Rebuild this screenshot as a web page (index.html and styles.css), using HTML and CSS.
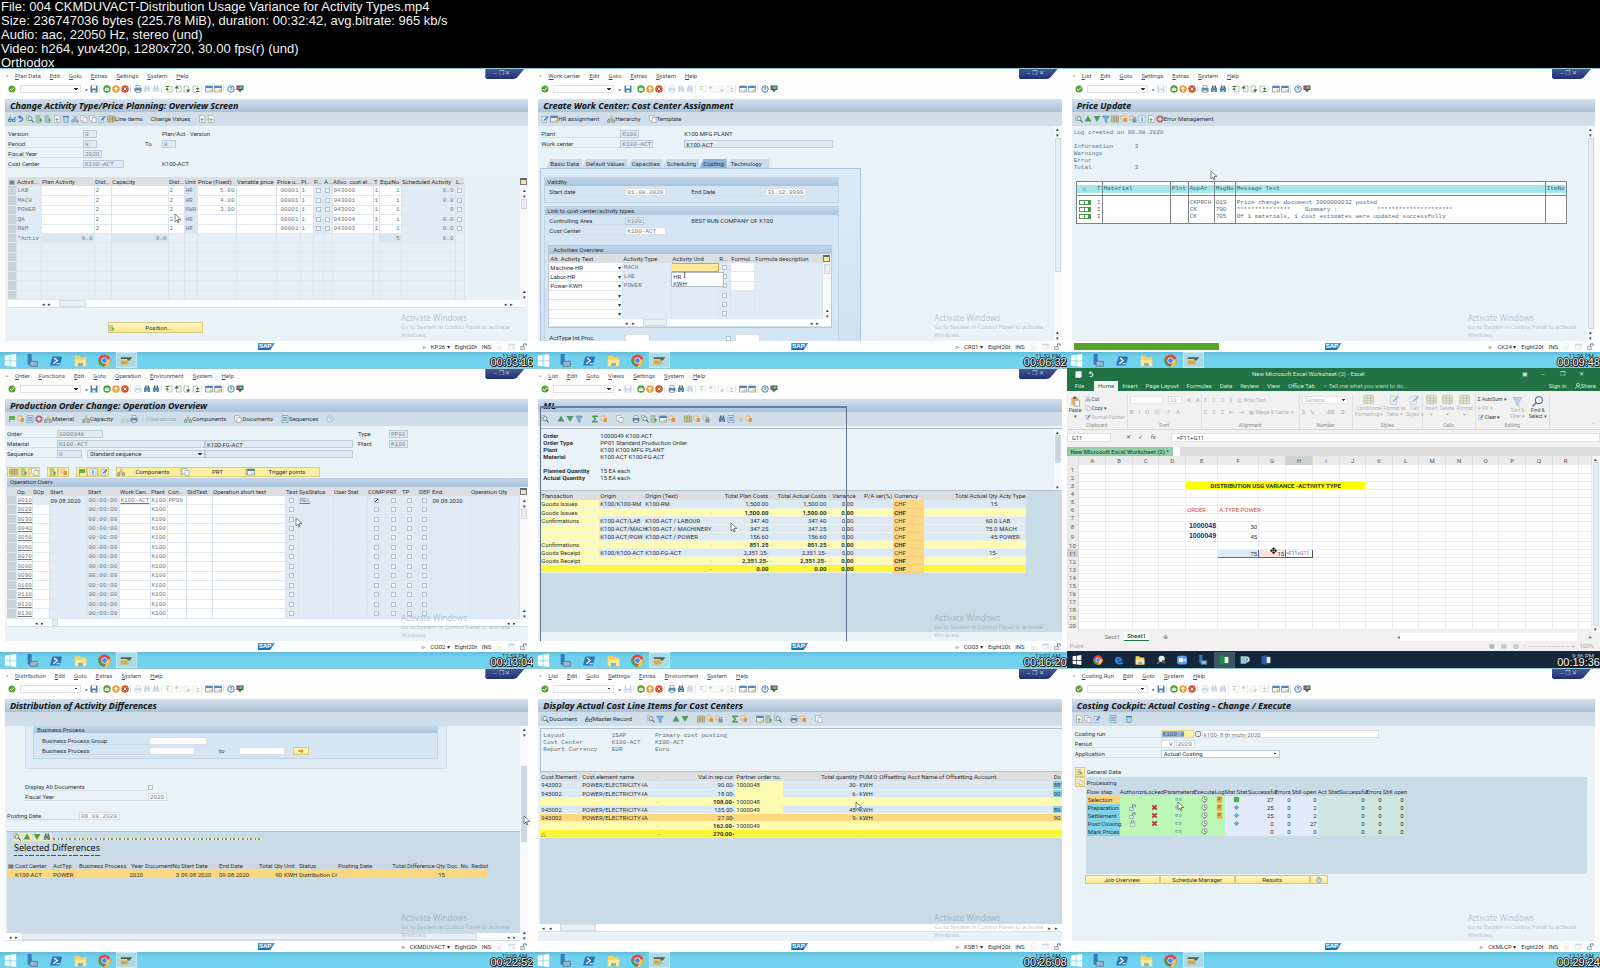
FILE: index.html
```
<!DOCTYPE html>
<html lang="en">
<head>
<meta charset="utf-8">
<title>004 CKMDUVACT-Distribution Usage Variance for Activity Types.mp4</title>
<link rel="stylesheet" href="styles.css">
</head>
<body>
<header class="info">
  <p>File: 004 CKMDUVACT-Distribution Usage Variance for Activity Types.mp4</p>
  <p>Size: 236747036 bytes (225.78 MiB), duration: 00:32:42, avg.bitrate: 965 kb/s</p>
  <p>Audio: aac, 22050 Hz, stereo (und)</p>
  <p>Video: h264, yuv420p, 1280x720, 30.00 fps(r) (und)</p>
  <p>Orthodox</p>
</header>
<main class="sheet">

<section class="shot" data-menu="Plan Data|Edit|Goto|Extras|Settings|System|Help" data-off="find findnext" data-tcode="KP26" data-clock="11:49 PM" data-time="00:03:16">
  <h2 class="title">Change Activity Type/Price Planning: Overview Screen</h2>
  <nav class="tools" data-tools="glasses undo lens rowadd rowadd page trash cut copy copy edit grid:Line_items gap none:Change_Values gap page page"></nav>
  <div class="body">
    <div class="form form-plan">
      <label for="p1v">Version</label><input id="p1v" class="w14" value="0" readonly><span></span><span class="txt">Plan/Act - Version</span>
      <label for="p1p">Period</label><input id="p1p" class="w14" value="8" readonly><label for="p1t" class="short">To</label><input id="p1t" class="w14" value="8" readonly>
      <label for="p1f">Fiscal Year</label><input id="p1f" class="w18" value="2020" readonly><span></span><span></span>
      <label for="p1c">Cost Center</label><input id="p1c" class="w39" value="K100-ACT" readonly><span></span><span class="txt">K100-ACT</span>
    </div>
    <div class="tablebox">
      <table class="grid plan" id="plan"></table>
      <div class="vscroll"><b class="cfg"></b><i>▴</i><i>▾</i><u></u><i>▴</i><i>▾</i></div>
    </div>
    <div class="hscroll h-plan"><i>◂ ▸</i><u></u><i>◂ ▸</i></div>
    <button class="yellow position"><span data-i="rowadd"></span><b>Position...</b></button>
  </div>
  <div class="cursor" style="left:174px;top:145px"></div>
</section>

<section class="shot" data-menu="Work center|Edit|Goto|Extras|System|Help" data-off="print find findnext p1 p2 p3 p4" data-tcode="CR01" data-clock="11:52 PM" data-time="00:06:32">
  <h2 class="title">Create Work Center: Cost Center Assignment</h2>
  <nav class="tools" data-tools="edit window:HR_assignment gap tree:Hierarchy gap copy:Template"></nav>
  <div class="body with-scroll">
   <div class="pane">
    <div class="form form-wc">
      <label for="p2p">Plant</label><input id="p2p" class="w18" value="K100" readonly><span class="txt">K100 MFG PLANT</span>
      <label for="p2w">Work center</label><input id="p2w" class="w32" value="K100-ACT" readonly><input class="sans" aria-label="Work center name" value="K100-ACT" readonly>
    </div>
    <div class="tabs"><button>Basic Data</button><button>Default Values</button><button>Capacities</button><button>Scheduling</button><button class="on">Costing</button><button>Technology</button></div>
    <div class="tabpane">
      <fieldset class="group">
        <h3>Validity</h3>
        <div class="form form-val">
          <label for="p2s">Start date</label><input id="p2s" class="w39 ed" value="01.08.2020"><label for="p2e">End Date</label><input id="p2e" class="w39 ed" value="31.12.9999">
        </div>
      </fieldset>
      <fieldset class="group grow">
        <h3>Link to cost center/activity types</h3>
        <div class="form form-val">
          <label for="p2a">Controlling Area</label><input id="p2a" class="w18" value="K100" readonly><span class="txt wide">BEST RUN COMPANY OF K100</span>
          <label for="p2c">Cost Center</label><input id="p2c" class="w39 ed" value="K100-ACT">
        </div>
        <div class="act">
          <h3>Activities Overview</h3>
          <div class="tablebox">
            <table class="grid" id="act"></table>
            <div class="vscroll"><b class="cfg"></b><u></u><i>▴</i><i>▾</i></div>
          </div>
          <div class="hscroll h-act"><i>◂ ▸</i><u></u><i>◂ ▸</i></div>
          <ul class="drop"><li>HR</li><li>KWH</li></ul>
        </div>
        <div class="form form-int"><label for="p2i">ActType Int.Proc.</label><input id="p2i" class="ed"><span></span><input type="checkbox" aria-label="Internal processing"><input class="ed" aria-label="Formula"></div>
      </fieldset>
    </div>
   </div>
   <div class="vscroll"><i>▴</i><i>▾</i><u class="long"></u><i>▴</i><i>▾</i></div>
  </div>
  <div class="ibeam" style="left:150px;top:202px">I</div>
</section>

<section class="shot" data-menu="List|Edit|Goto|Settings|Extras|System|Help" data-off="save" data-progress="1" data-tcode="CK24" data-clock="11:58 PM" data-time="00:09:48">
  <h2 class="title">Price Update</h2>
  <nav class="tools" data-tools="lens up down filter grid chart lock info page stop:Error_Management"></nav>
  <div class="body with-scroll">
   <div class="pane">
<pre class="log">Log created on 09.08.2020

Information      3
Warnings
Error
Total            3</pre>
    <table class="msgs">
      <colgroup><col class="c26"><col class="c68"><col class="c18"><col class="c26"><col class="c21"><col><col class="c21"></colgroup>
      <tr><th class="r"><span>△&nbsp;&nbsp; T</span></th><th><span>Material</span></th><th><span>Plnt</span></th><th><span>AppAr</span></th><th><span>MsgNo</span></th><th><span>Message Text</span></th><th><span>ItmNo</span></th></tr>
      <tr><td class="r"><s></s>I</td><td></td><td></td><td>CKPRCH</td><td>019</td><td>Price change document 3000000032 posted</td><td></td></tr>
      <tr><td class="r"><s></s>I</td><td></td><td></td><td>CK</td><td>790</td><td>***************&nbsp;&nbsp;&nbsp; Summary :&nbsp;&nbsp;&nbsp;&nbsp;&nbsp;&nbsp;&nbsp;&nbsp;&nbsp;&nbsp; *********************</td><td></td></tr>
      <tr><td class="r"><s></s>I</td><td></td><td></td><td>CK</td><td>705</td><td>Of 1 materials, 1 cost estimates were updated successfully</td><td></td></tr>
    </table>
   </div>
   <div class="vscroll"><i>▴</i><i>▾</i><u class="full"></u><i>▴</i><i>▾</i></div>
  </div>
  <div class="cursor" style="left:143px;top:102px"></div>
</section>

<section class="shot" data-menu="Order|Functions|Edit|Goto|Operation|Environment|System|Help" data-off="print" data-tcode="CO02" data-clock="11:59 PM" data-time="00:13:04">
  <h2 class="title">Production Order Change: Operation Overview</h2>
  <nav class="tools" data-tools="flag chart doc stop tree:Material gap tree:Capacity gap -tree print -info:Operations gap tree:Components gap copy:Documents gap doc:Sequences gap -help"></nav>
  <div class="body">
    <div class="form form-po">
      <label for="p4o">Order</label><input id="p4o" class="w46" value="1000048" readonly><span></span><span></span><label for="p4t" class="short">Type</label><input id="p4t" class="w18" value="PP01" readonly>
      <label for="p4m">Material</label><input id="p4m" value="K100-ACT" readonly><input class="sans" aria-label="Material text" value="K100-FG-ACT" readonly><span></span><label for="p4p" class="short">Plant</label><input id="p4p" class="w18" value="K100" readonly>
      <label for="p4s">Sequence</label><div class="pair"><input id="p4s" class="w25" value="0" readonly><select class="flat" aria-label="Sequence type"><option>Standard sequence</option></select></div><input aria-label="Sequence text" readonly>
    </div>
    <div class="strip"><button data-i="grid" aria-label="Select all"></button><button data-i="rowadd" aria-label="Select block"></button><button data-i="copy" aria-label="Deselect"></button><em></em><button data-i="rowadd" aria-label="Insert"></button><button data-i="chart" aria-label="Delete"></button><em></em><button data-i="flag" aria-label="Flag"></button><button data-i="info" aria-label="Detail"></button><button data-i="edit" aria-label="Change"></button><em></em><button class="wide"><span data-i="tree"></span><b>Components</b></button><button class="wide"><span data-i="copy"></span><b>PRT</b></button><button class="wide w74"><span data-i="window"></span><b>Trigger points</b></button></div>
    <h3 class="bar">Operation Overv.</h3>
    <div class="tablebox">
      <table class="grid ops" id="ops"></table>
      <div class="vscroll"><b class="cfg"></b><i>▴</i><i>▾</i><u></u><i>▴</i><i>▾</i></div>
    </div>
    <div class="hscroll h-ops"><i>◂ ▸</i><u></u><i>◂ ▸</i></div>
  </div>
  <div class="cursor" style="left:295px;top:149px"></div>
</section>

<section class="shot" data-menu="List|Edit|Goto|Views|Settings|System|Help" data-off="save findnext p1 p2 p3 p4" data-tcode="CO03" data-clock="12:02 AM" data-time="00:16:20">
  <h2 class="title">ML</h2>
  <nav class="tools" data-tools="lens gap up down filter gap sum chart gap copy gap print lens rowadd window chart gap grid chart lock gap find doc -chart chart"></nav>
  <div class="body alv">
    <div class="head">
      <dl>
        <dt>Order</dt><dd>1000049 K100-ACT</dd>
        <dt>Order Type</dt><dd>PP01 Standard Production Order</dd>
        <dt>Plant</dt><dd>K100 K100 MFG PLANT</dd>
        <dt>Material</dt><dd>K100-ACT K100-FG-ACT</dd>
        <dt></dt><dd></dd>
        <dt>Planned Quantity</dt><dd>15 EA each</dd>
        <dt>Actual Quantity</dt><dd>15 EA each</dd>
      </dl>
      <div class="vscroll"><i>▴</i><u class="half"></u><i>▾</i></div>
    </div>
    <div class="fill"><table class="grid ml" id="ml"></table></div>
  </div>
  <div class="ghost"></div>
  <div class="cursor" style="left:197px;top:154px"></div>
</section>

<section class="shot excel" data-time="00:19:36">
  <div class="xl-title"><span data-i="save"></span><span data-i="undo"></span><p>New Microsoft Excel Worksheet (2) - Excel</p><i>▣</i><i>–</i><i>❐</i><i>✕</i></div>
  <div class="xl-tabs"><a href="#">File</a><a href="#" class="on">Home</a><a href="#">Insert</a><a href="#">Page Layout</a><a href="#">Formulas</a><a href="#">Data</a><a href="#">Review</a><a href="#">View</a><a href="#">Office Tab</a><em>♀ Tell me what you want to do...</em><a href="#" class="end">Sign in</a><a href="#" class="share"><span data-i="person"></span>Share</a></div>
  <div class="ribbon">
    <div class="rg g-clip"><div class="two"><button class="big dark"><span data-i="clip"></span>Paste<br>▾</button><div class="three"><button class="dark"><span data-i="cut"></span>Cut</button><button class="dark"><span data-i="copy"></span>Copy ▾</button><button><span data-i="edit"></span>Format Painter</button></div></div><p>Clipboard</p></div>
    <div class="rg g-font"><div class="rows"><div><input aria-label="Font" class="w32"><input aria-label="Font size" class="w14" value="11"><b>A</b><b>A</b></div><div><b>B</b><b><em>I</em></b><b><u>U</u></b><span data-i="grid"></span><span data-i="edit"></span><b>A</b></div></div><p>Font</p></div>
    <div class="rg g-align"><div class="rows"><div><b>≡</b><b>≡</b><b>≡</b><b>⟫</b><button>▤ Wrap Text</button></div><div><b>≡</b><b>≡</b><b>≡</b><b>⇤</b><b>⇥</b><button>▦ Merge &amp; Center ▾</button></div></div><p>Alignment</p></div>
    <div class="rg g-num"><div class="rows"><div><select aria-label="Number format"><option>General</option></select></div><div><b>$</b><b>%</b><b>,</b><b>.00</b><b>.0</b></div></div><p>Number</p></div>
    <div class="rg g-sty"><div class="two"><button class="big"><span data-i="grid"></span>Conditional<br>Formatting ▾</button><button class="big"><span data-i="edit"></span>Format as<br>Table ▾</button><button class="big"><span data-i="edit"></span>Cell<br>Styles ▾</button></div><p>Styles</p></div>
    <div class="rg g-cell"><div class="two"><button class="big"><span data-i="grid"></span>Insert<br>▾</button><button class="big"><span data-i="grid"></span>Delete<br>▾</button><button class="big"><span data-i="grid"></span>Format<br>▾</button></div><p>Cells</p></div>
    <div class="rg g-edit"><div class="two"><div class="three"><button class="dark">Σ AutoSum ▾</button><button>▾ Fill ▾</button><button class="dark"><span data-i="edit"></span>Clear ▾</button></div><button class="big"><span data-i="filter"></span>Sort &amp;<br>Filter ▾</button><button class="big dark"><span data-i="search"></span>Find &amp;<br>Select ▾</button></div><p>Editing</p></div>
    <i class="caret">⌃</i>
  </div>
  <div class="fx"><input aria-label="Name box" class="namebox" value="G11"><span>✕&nbsp;&nbsp;&nbsp;&nbsp; ✓&nbsp;&nbsp;&nbsp;&nbsp; <em>fx</em></span><input aria-label="Formula bar" class="formula" value="=F11+G11"></div>
  <div class="doctab"><b>New Microsoft Excel Worksheet (2) *</b><u></u></div>
  <div class="xl-main"><table class="cells" id="cells"></table><div class="vscroll"><i>▴</i><u class="full"></u><i>▾</i></div></div>
  <div class="sheets"><span>Sect1</span><b>Sheet1</b><i>⊕</i><div class="hbar"><i>◂</i><u></u><i>▸</i></div></div>
  <div class="xl-status"><span>Point</span><em>▦&nbsp;&nbsp;&nbsp; ▤&nbsp;&nbsp;&nbsp; ▥&nbsp;&nbsp; − ————————— +&nbsp;&nbsp; 100%</em></div>
  <div class="task dark" id="task10"></div>
  <div class="cross" style="left:203px;top:178px">✥</div>
</section>

<section class="shot" data-menu="Distribution|Edit|Goto|Extras|System|Help" data-off="print find findnext p1 p2 p3 p4" data-tcode="CKMDUVACT" data-clock="12:09 AM" data-time="00:22:52">
  <h2 class="title">Distribution of Activity Differences</h2>
  <nav class="tools"></nav>
  <div class="body with-scroll">
   <div class="pane dist">
    <div class="outer"><fieldset class="group">
      <h3>Business Process</h3>
      <div class="form form-bp">
        <label for="p7g">Business Process Group</label><input id="p7g" class="w58 ed">
        <label for="p7b">Business Process</label><input id="p7b" class="w46 ed"><label for="p7t" class="short">to</label><input id="p7t" class="w46 ed"><button class="yellow" data-i="arrow" aria-label="Multiple selection"></button>
      </div>
    </fieldset></div>
    <div class="form form-disp">
      <label for="p7d">Display All Documents</label><input id="p7d" type="checkbox">
      <label for="p7f">Fiscal Year</label><input id="p7f" class="w18 ed" value="2020">
    </div>
    <div class="form form-post"><label for="p7p">Posting Date</label><input id="p7p" class="w39 ed" value="09.08.2020"></div>
    <div class="fill diff">
      <nav class="cutbar"><button data-i="lens" aria-label="Details"></button><button data-i="up" aria-label="Sort ascending"></button><button data-i="down" aria-label="Sort descending"></button><button data-i="find" aria-label="Find"></button><span></span><span></span><span class="l"></span><span class="l"></span><span class="l"></span><span></span></nav>
      <h3 class="sel">Selected Differences</h3>
      <div class="sliver" aria-hidden="true"></div>
      <table class="grid diffs" id="diffs"></table>
    </div>
    <div class="hscroll h-dist"><i>◂ ▸</i><u></u><i>◂ ▸</i></div>
   </div>
   <div class="vscroll"><i>▴</i><i>▾</i><u class="low"></u><i>▴</i><i>▾</i></div>
  </div>
  <div class="cursor" style="left:523px;top:147px"></div>
</section>

<section class="shot" data-menu="List|Edit|Goto|Settings|Extras|Environment|System|Help" data-off="save findnext p1 p2 p3 p4" data-tcode="KSB1" data-clock="12:12 AM" data-time="00:26:08">
  <h2 class="title">Display Actual Cost Line Items for Cost Centers</h2>
  <nav class="tools" data-tools="lens:Document gap glasses:Master_Record gap gap lens filter gap up down gap grid chart lock gap sum chart gap window rowadd lens gap print chart gap copy"></nav>
  <div class="body alv">
    <div class="head ks"><pre>Layout             1SAP        Primary cost posting
Cost Center        K100-ACT    K100-ACT
Report Currency    EUR         Euro</pre></div>
    <div class="fill"><table class="grid ksb" id="ksb"></table></div>
    <div class="hscroll h-ksb"><i>◂ ◂</i><u></u><i>▸ ▸</i></div>
  </div>
  <div class="cursor" style="left:322px;top:133px"></div>
</section>

<section class="shot" data-menu="Costing Run|Edit|Goto|System|Help" data-off="print find findnext p1 p2 p3 p4" data-tcode="CKMLCP" data-clock="12:15 AM" data-time="00:29:24">
  <h2 class="title">Costing Cockpit: Actual Costing - Change / Execute</h2>
  <nav class="tools" data-tools="page copy edit gap doc gap trash"></nav>
  <div class="body">
    <div class="form form-run">
      <label for="p9r">Costing run</label><div class="pair"><input id="p9r" class="w32 hot" value="K100-8"><button class="match" aria-label="Value help"></button><input class="sans ed name" aria-label="Run name" value="k100- 8 th motn-2020"></div>
      <label for="p9p">Period</label><div class="pair tight"><input id="p9p" class="w14 ed r" value="8"><input class="w18 ed" aria-label="Year" value="2020"></div>
      <label for="p9a">Application</label><select id="p9a" class="white"><option>Actual Costing</option></select>
    </div>
    <div class="node"><button class="yellow" data-i="rowadd" aria-label="Expand"></button>General Data</div>
    <div class="proc">
      <button class="yellow" data-i="copy" aria-label="Collapse"></button>
      <div class="fill"><h3>Processing</h3><table class="grid flow" id="flow"></table></div>
    </div>
    <div class="jobs"><button class="yellow">Job Overview</button><button class="yellow">Schedule Manager</button><button class="yellow">Results</button><button class="yellow" data-i="help" aria-label="Refresh"></button></div>
  </div>
  <div class="cursor" style="left:110px;top:133px"></div>
</section>
</main>
<script src="app.js"></script>
</body>
</html>
```
FILE: styles.css
```
* { box-sizing: border-box; }
body { margin: 0; background: #000; font-family: Roboto, "Noto Sans", sans-serif; font-size: 6px; line-height: 8px; color: #2c3338; }
p, h2, h3, pre, dl, dd, ul { margin: 0; padding: 0; }
h2, h3 { font-weight: 400; font-size: 6px; }
i, em { font-style: normal; }
u { text-decoration: none; }
button, input, select { font: inherit; color: inherit; margin: 0; border-radius: 0; }
button { border: 0; padding: 0; background: none; white-space: nowrap; }
svg { display: block; width: 8px; height: 8px; }

.info { height: 68px; padding-left: 1px; background: #000; color: #f2f2f2; font: 13px/14px "Liberation Sans", Arial, sans-serif; }
.sheet { display: grid; grid-template-columns: repeat(3, minmax(0, 1fr)); }
.shot { position: relative; display: flex; flex-direction: column; min-height: 300px; min-width: 0; background: #fdfdfd; border-top: 1px solid #8fc9d8; overflow: hidden; white-space: nowrap; }

/* window chrome */
.menu { display: flex; gap: 9px; height: 14px; padding: 3px 0 0 6px; color: #4c5358; }
.menu a { color: inherit; text-decoration: none; }
.menu a::first-letter { text-decoration: underline; }
.menu span { width: 1px; margin-right: -1px; }
.std { display: flex; align-items: center; height: 16px; padding: 0 0 5px 8px; gap: 1px; }
.std em { width: 3px; height: 8px; border-left: 1px solid #e3e6e8; }
.std select { width: 61px; height: 9px; margin: 0 3px; border: 1px solid #e0e2e4; background: #fff; }
.off { opacity: .3; }
.winctl { position: absolute; top: 0; right: 9px; width: 39px; height: 10px; background: linear-gradient(#46598f, #1f2f77); clip-path: polygon(0 0, 100% 0, 80% 90%, 72% 100%, 4% 100%, 0 85%); color: #b9c4ea; text-align: center; padding-right: 6px; }
.title { height: 13px; margin: 0 5px; padding-left: 5px; background: linear-gradient(#d3e0ec, #a9c1d7); font: italic 700 9px/13px "Noto Sans", sans-serif; color: #0c1013; }
.tools { display: flex; align-items: center; gap: 1px; height: 14px; margin: 0 5px; padding-left: 3px; background: #cfdee8; }
.tools em { width: 6px; }
.tools button { display: flex; align-items: center; }
.body { position: relative; flex: 1; display: flex; flex-direction: column; margin: 0 5px; background: #e9f2f7; }
.with-scroll { flex-direction: row; }
.pane { flex: 1; min-width: 0; display: flex; flex-direction: column; }
.status { display: flex; align-items: center; justify-content: flex-end; height: 11px; padding-right: 6px; gap: 5px; background: #fff; position: relative; }
.status .sap { position: absolute; left: 258px; top: 2px; width: 17px; height: 7px; background: linear-gradient(#36a9e1, #1667ae); clip-path: polygon(0 0, 100% 0, 72% 100%, 0 100%); color: #fff; font: 700 6px/7px "Liberation Sans", sans-serif; padding-left: 1px; }
.status .bar-green { position: absolute; left: 7px; top: 2px; width: 145px; height: 7px; background: #54a62b; }
.status svg { width: 7px; height: 7px; }
.task { display: flex; align-items: center; height: 16px; background: linear-gradient(#63bcd9, #70d2ee 30%, #70d2ee); }
.task button { width: 24px; height: 16px; display: flex; align-items: center; justify-content: center; }
.task button:first-child { width: 20px; }
.task .on { width: 21px; background: #a9dbe9; border: 1px solid #c4e8f2; }
.task svg { width: 13px; height: 13px; }
.task .tray { margin-left: auto; width: 68px; height: 16px; text-align: right; padding-right: 6px; color: #1c3440; line-height: 7px; }
.time { position: absolute; right: 0; bottom: 0; font: 11px/11px "Liberation Sans", sans-serif; color: #fff; text-shadow: 1px 0 #111, -1px 0 #111, 0 1px #111, 0 -1px #111, 1px 1px #111; }
.mark { position: absolute; left: 401px; top: 243px; width: 112px; font-size: 6px; color: rgba(110, 125, 138, .42); white-space: normal; }
.mark b { display: block; font: 8px/11px "Noto Sans", sans-serif; }
.cursor, .ibeam, .cross { position: absolute; width: 8px; height: 10px; }
.ibeam { font: 8px/9px "Liberation Serif", serif; }
.cross { font: 9px/10px "DejaVu Sans", sans-serif; color: #111; }
.cursor svg { width: 8px; height: 10px; }
.ghost { position: absolute; left: 7px; top: 37px; width: 307px; bottom: 16px; border: 1px solid #5d7289; border-top: 2px solid #5b7fae; border-bottom: 0; }

/* form fields */
.form { display: grid; grid-auto-rows: 8px; row-gap: 2px; align-items: stretch; }
.form label { border-bottom: 1px solid #d3dee6; line-height: 8px; }
.form .short { border: 0; }
.form .txt { line-height: 8px; }
input { width: 100%; height: 8px; padding: 0 1px; border: 1px solid #bccbd8; background: #dfeaf3; font: 6px/6px "Liberation Mono", monospace; color: #7b8793; }
input.sans { font-family: Roboto, sans-serif; color: #2c3338; }
input.ed { background: #fff; border-color: #d8dee4; color: #72787e; }
input.r { text-align: right; }
input[type=checkbox] { appearance: none; width: 5px; height: 5px; padding: 0; border: 1px solid #b3c1ce; background: #f5f9fc; }
input[type=checkbox]:checked { background: linear-gradient(135deg, #fff 40%, #333 40%, #333 60%, #fff 60%); }
.form input[type=checkbox] { align-self: center; background: #fff; }
select { appearance: none; padding: 0 2px; border: 1px solid #bccbd8; }
select, .std select { background: linear-gradient(45deg, transparent 50%, #333 50%) no-repeat right 4px top 2px / 2px 2px, linear-gradient(-45deg, transparent 50%, #333 50%) no-repeat right 2px top 2px / 2px 2px, #fff; height: 8px; line-height: 6px; }
select.flat { background-color: #e2ecf4; }
.w14 { width: 14px; } .w18 { width: 19px; } .w25 { width: 25px; } .w32 { width: 33px; } .w39 { width: 41px; } .w46 { width: 46px; } .w58 { width: 58px; }
.form-plan { grid-template-columns: 75px 62px 17px 1fr; padding: 4px 0 0 3px; }
.form-wc { grid-template-columns: 79px 64px 149px; padding: 4px 0 0 3px; }
.form-val { grid-template-columns: 76px 66px 74px 1fr; padding: 2px 0 0 4px; }
.form-val .wide { grid-column: span 2; }
.form-int { grid-template-columns: 76px 25px 76px 9px 25px; padding: 6px 0 0 4px; }
.form-int label { border: 0; }
.form-po { grid-template-columns: 50px 148px 148px 5px 31px 20px; padding: 4px 0 0 2px; }
.pair { display: flex; gap: 5px; }
.pair select { flex: 1; }
.pair.tight { gap: 1px; }
.form-bp { grid-template-columns: 107px 70px 20px 54px 16px; padding: 4px 0 0 8px; }
.form-bp #p7g { grid-column: span 4; }
.form-bp label, .form-post label { border-color: #cbd9e4; }
.form-disp { grid-template-columns: 123px 20px; padding: 14px 0 0 20px; }
.form-post { grid-template-columns: 72px 40px; padding: 11px 0 0 2px; }
.form-run { grid-template-columns: 86px 218px; padding: 4px 0 0 3px; }
.form-run .pair { gap: 1px; }
.form-run select { width: 119px; }
.form-run .name { flex: 1; }
.hot { background: linear-gradient(90deg, #9db8d3 70%, #fdf0a3 70%); border-color: #e5d98d; color: #3c5873; }
.match { width: 6px; height: 6px; border: 1px solid #7d8b97; border-radius: 2px; align-self: center; }

/* scroll bars */
.vscroll { width: 8px; display: flex; flex-direction: column; background: #f7fafc; font-size: 5px; line-height: 6px; text-align: center; }
.vscroll i { height: 6px; }
.vscroll u { width: 6px; margin: 0 1px auto; height: 10px; background: #e6edf3; border: 1px solid #cdd8e1; }
.vscroll u.long { height: 134px; }
.vscroll u.full { flex: 1; margin-bottom: 0; }
.vscroll u.half { height: 28px; margin-bottom: auto; background: #cbd4db; }
.vscroll u.low { height: 76px; margin-top: 28px; background: #cad9e5; }
.vscroll .cfg { width: 7px; height: 7px; margin: 1px 0 2px; background: #fbe98b; border: 1px solid #6f7c86; border-top: 2px solid #4b6a88; }
.hscroll { display: flex; height: 8px; align-items: center; background: #fdfefe; border-bottom: 1px solid #d4e0ea; font-size: 5px; }
.hscroll u { height: 7px; margin: 0 auto 0 4px; border: 1px solid #cfdbe5; background: #e8f0f6; }
.hscroll i { word-spacing: 2px; padding: 0 4px; }
.h-plan { margin: 0 3px; padding: 0 8px 0 30px; } .h-plan u { width: 27px; }
.h-act { padding: 0 8px 0 72px; } .h-act u { width: 24px; }
.h-ops { margin: 0 0 0 2px; padding: 0 8px 0 24px; } .h-ops u { width: 6px; }
.h-dist u { flex: 1; margin: 0 26px 0 0; }
.h-ksb { margin-bottom: 9px; } .h-ksb u { width: 36px; }

/* tables */
.tablebox { display: flex; }
.tablebox table { flex: 1; min-width: 0; }
.grid { width: 100%; table-layout: fixed; border-collapse: collapse; line-height: 7px; }
.grid th { font-weight: 400; text-align: left; padding: 0 1px; background: #dcdfe2; height: 9px; }
.grid td { padding: 0 1px; border-bottom: 1px solid #dfe8f0; }
.grid .r { text-align: right; }
.grid .c { text-align: center; }
.grid input { display: block; margin: 0 auto; }
.grid svg { display: inline-block; width: 7px; height: 7px; vertical-align: top; }
.mono { font-family: "Liberation Mono", monospace; color: #75797d; }
.grid .w { background: #fff; }
.grid .u { text-decoration: underline; }
.plan { height: 123px; }
.plan td { height: 9px; }
.plan td, #act td, .ops td { border-right: 1px solid #dbe5ee; background: #e1ebf5; }
.plan td.w, #act td.w, .ops td.w { background: #fff; }
.plan td.s, .ops td.s { background: #cbd3da; }
.plan td.e { background: #e7eff6; }
.plan td.d { background: #d8e6f3; }
.body > .tablebox { margin: 9px 0 0 3px; }
.form-po ~ .tablebox { margin: 0 0 0 2px; }
.plan td.z, .ops td.z, .plan th.z { background: #e6f0f7; border: 0; }
.ops { height: 132px; }
.yellow { background: linear-gradient(#fff7c9, #fae78c); border: 1px solid #d5c681; display: flex; align-items: center; justify-content: center; }
.yellow svg { width: 6px; height: 6px; }
.position { width: 95px; height: 11px; margin: 14px 0 0 103px; }
.position b, .wide b { flex: 1; font-weight: 400; }

/* work center */
.tabs { display: flex; height: 9px; margin: 11px 0 0 8px; }
.tabs button { padding: 0 3px 0 4px; background: #c9dbea; clip-path: polygon(4px 0, 100% 0, 100% 100%, 0 100%); line-height: 9px; }
.tabs button:last-child { padding-right: 8px; }
.tabs .on { background: #8db2d8; }
.tabpane { flex: 1 1 0px; display: flex; flex-direction: column; width: 321px; margin-left: 2px; padding: 8px 21px 0 3px; border: 1px solid #a9c5de; border-bottom: 0; background: linear-gradient(#dcebf7, #cfe1f1); gap: 3px; overflow: hidden; }
.group { margin: 0; padding: 0; min-width: 0; border: 1px solid #bfd3e4; background: #d5e5f3; min-height: 26px; }
.group h3, .act h3, .bar { height: 8px; padding-left: 2px; background: linear-gradient(#c3d6e8, #a9c3dc); line-height: 8px; }
.grow { flex: 1; border-bottom: 0; }
.act { position: relative; margin: 10px 6px 0 3px; border: 1px solid #b5cade; }
.act h3 { padding-left: 4px; }
#act { height: 65px; }
#act td.hot { background: #fdea9b; border: 1px solid #c9a94d; }
.drop { position: absolute; left: 122px; top: 26px; width: 53px; height: 15px; padding-left: 1px; background: #fff; border: 1px solid #b3bcc4; list-style: none; line-height: 7px; }

/* price update */
.log { margin: 3px 0 0 2px; font: 6px/7px "Liberation Mono", monospace; color: #5d7890; }
.msgs { width: 491px; margin: 10px 0 0 4px; table-layout: fixed; border-collapse: collapse; border: 1px solid #7c8489; background: #fff; font: 6px/7px "Liberation Mono", monospace; color: #666b70; }
.msgs th, .msgs td { padding: 0 1px; height: 7px; text-align: left; border-left: 1px solid #7c8489; font-weight: 400; }
.msgs th { height: 14px; padding: 0; border-bottom: 1px solid #7c8489; }
.msgs th span { display: block; background: #a3e7ee; color: #3c5d6c; padding: 0 1px; height: 8px; }
.msgs tr:nth-child(2) td { padding-top: 3px; }
.msgs tr:last-child td { padding-bottom: 3px; }
.msgs .r { text-align: right; }
.msgs s { float: left; width: 12px; height: 5px; margin: 1px; border: 1px solid #4f9a4f; background: linear-gradient(90deg, #fff 4px, #58a558 4px, #58a558 5px, #fff 5px, #fff 8px, #2c9b3a 8px); }
.c26 { width: 26px; } .c68 { width: 68px; } .c18 { width: 18px; } .c21 { width: 21px; }

/* production order */
.strip { display: flex; height: 10px; margin: 9px 0 1px 2px; }
.strip button { width: 11px; display: flex; align-items: center; justify-content: center; background: #fbeea0; border: 1px solid #d9ca84; }
.strip em { width: 7px; }
.strip .wide { width: 65px; }
.strip .w74 { width: 74px; }
.bar { margin-left: 2px; padding-left: 3px; height: 9px; }

/* list viewer */
.head { display: flex; justify-content: space-between; height: 62px; margin: 2px 0 0 2px; border: 1px solid #aebdc9; border-width: 1px 0 0 1px; }
.head dl { display: grid; grid-template-columns: 57px 1fr; grid-auto-rows: 7px; padding: 3px 0 0 2px; line-height: 8px; }
.head dt { font-weight: 700; }
.ks { height: 43px; }
.head pre { padding: 3px 0 0 2px; font: 6px/7px "Liberation Mono", monospace; color: #6a6f74; }
.fill { flex: 1; margin-left: 2px; background: #c9dbe7; border-top: 1px solid #b2c1cc; }
.alv .fill { margin-bottom: 9px; }
.alv .fill:nth-last-child(2) { margin-bottom: 0; }
.ml { width: 486px; }
.ml td, .ksb td { height: 8px; border-color: #eaf1f6; background: #dde8f5; line-height: 7px; }
.ml td { border-bottom-color: #ecf2e8; }
.ml .y, .ksb .y, .ml tr.sub td, .ksb tr.sub td { background: #fdfbb0; }
.ml tr.tot td, .ksb tr.tot td { background: #fdf53a; }
.ml td.cur, .ml tr.sub td.cur, .ml tr.tot td.cur { background: #fbd983; border-bottom-color: #f6cf7b; }
.ksb tr.pick td, .diffs td { background: #fbd77e; }
.ksb td.cy { background: #86d3e3; }
.bold { font-weight: 700; }

/* distribution */
.outer { margin-left: 20px; margin-right: 73px; padding: 0 8px 9px 7px; height: 43px; border: 1px solid #c9dae7; border-top: 0; background: #dfebf5; }
.outer .group { height: 33px; }
.outer h3 { height: 6px; line-height: 5px; padding-left: 3px; }
.diff { margin-top: 11px; }
.cutbar { display: flex; gap: 1px; height: 9px; padding-left: 6px; align-items: center; }
.cutbar button { width: 9px; height: 8px; background: #f6eca6; }
.cutbar span { width: 20px; height: 2px; margin-top: 5px; background: repeating-linear-gradient(90deg, #889 0 2px, #f7edb0 2px 5px, #5d8c55 5px 6px, #f7edb0 6px 8px); }
.cutbar .l { width: 48px; }
.sel { padding-left: 7px; font: 9px/14px "Noto Sans", sans-serif; color: #111; }
.sliver { width: 86px; height: 1px; margin: 0 0 4px 7px; background: repeating-linear-gradient(90deg, #46525b 0 3px, #c9dbe7 3px 4px, #46525b 4px 9px, #c9dbe7 9px 11px); }
.diffs th { background: #ccd9e2; height: 10px; }
.diffs td { height: 8px; border: 0; }
.diffs { width: 481px; }

/* costing cockpit */
.node { display: flex; gap: 2px; height: 10px; margin: 9px 0 0 3px; line-height: 10px; }
.node .yellow, .proc .yellow { width: 10px; height: 10px; }
.proc { display: flex; margin: 0 8px 0 3px; height: 97px; }
.proc .fill { margin: 0; border: 0; margin-left: 1px; padding-left: 1px; }
.proc h3 { height: 10px; line-height: 11px; }
.flow { width: 318px; }
.flow th { background: none; padding: 0; }
.flow td { height: 8px; line-height: 8px; border: 0; background: #e2eafa; }
.flow td.g { background: #bdf7b8; } .flow td.t { background: #cfe5df; } .flow td.b { background: #7fd4ea; } .flow td.o { background: #fbd27a; }
.jobs { display: flex; margin: 1px 0 0 13px; }
.jobs button { width: 75px; height: 9px; }
.jobs button:last-child { width: 18px; }

/* spreadsheet */
.excel { background: #f1f1f1; border-top: 0; }
.xl-title { display: flex; align-items: center; gap: 6px; height: 12px; padding: 0 8px; background: #217346; color: #d5e8dc; }
.xl-title p { flex: 1; text-align: center; }
.xl-title i { width: 13px; }
.xl-title svg { width: 7px; height: 7px; filter: brightness(3); }
.xl-tabs { display: flex; align-items: flex-end; height: 11px; background: #217346; color: #d5e8dc; }
.xl-tabs a { padding: 0 4px; line-height: 10px; color: inherit; text-decoration: none; }
.xl-tabs a:first-child { padding: 0 10px 0 8px; }
.xl-tabs .on { background: #f5f5f5; color: #217346; }
.xl-tabs em { padding-left: 4px; line-height: 10px; color: #b9d6c5; }
.xl-tabs .end { margin-left: auto; }
.xl-tabs .share { display: flex; align-items: center; }
.xl-tabs svg { width: 6px; height: 6px; }
.ribbon { display: flex; height: 39px; padding: 3px 0 0; color: #b2b2b2; border-bottom: 1px solid #d5d5d5; position: relative; }
.rg { display: flex; flex-direction: column; justify-content: space-between; border-right: 1px solid #dfdfdf; padding: 0 2px; }
.rg p { text-align: center; color: #8c8c8c; font-size: 5px; line-height: 7px; }
.g-clip { width: 61px; } .g-font { width: 74px; } .g-align { width: 98px; } .g-num { width: 53px; } .g-sty { width: 70px; } .g-cell { width: 53px; } .g-edit { width: 74px; }
.two { display: flex; justify-content: space-between; }
.big { font-size: 5px; line-height: 6px; text-align: center; }
.big svg { width: 11px; height: 11px; margin: 0 auto; opacity: .45; }
.dark { color: #444; }
.dark svg { opacity: 1; }
.three { display: flex; flex-direction: column; }
.three button { display: flex; height: 9px; font-size: 5px; align-items: center; }
.three svg { width: 6px; height: 6px; margin-right: 1px; }
.rows > div { display: flex; gap: 5px; height: 12px; align-items: center; }
.rows button { font-size: 5px; }
.rows b { font-weight: 500; }
.rows svg { width: 6px; height: 6px; opacity: .3; }
.rows input, .rows select { background-color: #fff; border-color: #e2e2e2; color: #bbb; }
.rows select { width: 46px; }
.caret { position: absolute; right: 4px; bottom: 0; }
.fx { display: flex; align-items: center; height: 17px; padding-bottom: 3px; color: #555; }
.fx span { width: 60px; text-align: center; }
.fx em { font-style: italic; }
.fx input { background: #fff; border-color: #e1e1e1; font-family: Roboto, sans-serif; color: #444; height: 9px; }
.fx .namebox { width: 44px; padding-left: 4px; }
.fx .formula { flex: 1; padding-left: 5px; }
.doctab { display: flex; height: 9px; background: #dcdcdc; }
.doctab b { width: 106px; background: #93cda9; color: #1d5b37; font-weight: 500; text-align: center; line-height: 9px; }
.doctab u { width: 7px; background: #fff; }
.xl-main { display: flex; align-items: flex-start; flex: 1 1 0px; overflow: hidden; }
.xl-main .vscroll { align-self: stretch; }
.cells { flex: 1; table-layout: fixed; border-collapse: collapse; width: 100%; background: #fff; line-height: 7px; }
.cells th { background: #eaeaea; font-weight: 400; color: #555; padding: 0; border-right: 1px solid #dcdcdc; }
.cells tr:first-child { height: 9px; }
.cells tr { height: 8px; }
.cells td { padding: 0 1px; border-right: 1px solid #ececec; border-bottom: 1px solid #ececec; }
.cells .hl { background: #cfd3d0; }
.cells .t { height: 10px; }
.cells .ye { background: #fdfd00; color: #333; text-align: center; font-weight: 700; }
.cells .red { color: #d9403c; }
.cells .num { font: 700 7px/8px "Liberation Sans", sans-serif; color: #1a1f8c; text-align: right; }
.cells .r { text-align: right; }
.cells .bl { background: #dfeaf7; border: 1px solid #4b6a9b; text-align: right; }
.cells .pk { background: #f9e3dd; border: 1px solid #a04a45; text-align: right; }
.cells .ac { border: 1px solid #44546a; color: #4775a8; padding: 0; font-size: 5px; }
.sheets { display: flex; align-items: center; height: 9px; padding-left: 38px; gap: 4px; color: #777; }
.sheets b { padding: 0 3px; background: #fff; color: #217346; border-bottom: 1px solid #217346; }
.sheets > i { padding-left: 10px; }
.hbar { display: flex; width: 203px; margin-left: auto; padding-right: 8px; }
.hbar u { flex: 1; background: #fff; margin-right: 12px; }
.xl-status { display: flex; justify-content: space-between; height: 10px; padding: 1px 6px 0 3px; color: #a5a5a5; }
.task.dark { background: #16273b; height: 17px; }
.task.dark button { width: 21px; }
.task.dark .on { background: #3d5760; border: 0; }
.task.dark svg { width: 10px; height: 10px; }
.task.dark .tray { color: #c9d2da; }
```
FILE: app.js
```
const ICONS = {
  ok: '<circle cx="8" cy="8" r="7" fill="#5aa02c"/><path d="M4 8l3 3 5-6" stroke="#fff" stroke-width="2" fill="none"/>',
  save: '<path d="M1 1h14v14H1z" fill="#4f7ea5"/><path d="M4 1h8v6H4z" fill="#fff"/><path d="M5 10h6v5H5z" fill="#dbe8f2"/>',
  back: '<circle cx="8" cy="8" r="7.5" fill="#4fa23a"/><path d="M3 10q0-5 5-5 5 0 5 5" fill="#d4ecca"/><path d="M4 10h8v2H4z" fill="#fff"/>',
  exit: '<circle cx="8" cy="8" r="7.5" fill="#f0a030"/><path d="M8 3l4 5H9v5H7V8H4z" fill="#fff"/>',
  cancel: '<circle cx="8" cy="8" r="7.5" fill="#d5512c"/><path d="M5 5l6 6M11 5l-6 6" stroke="#fff" stroke-width="2"/>',
  print: '<path d="M4 1h8v5H4z" fill="#fff" stroke="#667"/><path d="M1 6h14v7H1z" fill="#5f8fb5"/><path d="M4 10h8v5H4z" fill="#e6eef5" stroke="#667"/>',
  find: '<path d="M2 5h5v9H2zM9 5h5v9H9z" fill="#5d87ab"/><path d="M4 1h3v5H4zM9 1h3v5H9zM6 7h4v3H6z" fill="#44698a"/>',
  page: '<path d="M3 1h7l4 4v10H3z" fill="#fff" stroke="#7a8792"/><path d="M8 6l-4 4h3v4h2v-4h3z" fill="#6aa84f"/>',
  p1: '<path d="M5 2h9v12H5z" fill="#fbfdfa" stroke="#7d8a76"/><path d="M1 2h7v2H1zM4 5l4 5H1z" fill="#3f7a35"/>',
  p2: '<path d="M5 2h9v12H5z" fill="#fbfdfa" stroke="#7d8a76"/><path d="M5 1l5 6H1z" fill="#3f7a35"/>',
  p3: '<path d="M2 2h9v12H2z" fill="#fbfdfa" stroke="#7d8a76"/><path d="M10 15l5-6H6z" fill="#3f7a35"/>',
  p4: '<path d="M2 2h9v12H2z" fill="#fbfdfa" stroke="#7d8a76"/><path d="M8 12h7v2H8zM11 11l4-5H8z" fill="#3f7a35"/>',
  window: '<path d="M1 2h14v12H1z" fill="#eaf3fb" stroke="#567"/><path d="M1 2h14v4H1z" fill="#4f86bd"/><path d="M9 9h5v4H9z" fill="#f0c850"/>',
  help: '<circle cx="8" cy="8" r="6.5" fill="#e6f1fa" stroke="#5588b5" stroke-width="2"/><path d="M6 6q2-3 4 0c0 2-2 1-2 4" stroke="#37699a" fill="none" stroke-width="1.5"/>',
  monitor: '<path d="M1 1h14v9H1z" fill="#3b5870"/><path d="M3 3h5v5H3z" fill="#e55"/><path d="M8 3h5v5H8z" fill="#6c6"/><path d="M4 10h8l-4 5z" fill="#4d7a55"/>',
  glasses: '<path d="M1 12l4-9M15 4l-4 9" stroke="#377" stroke-width="2"/><path d="M1 9h5v4H1zM9 9h5v4H9zM5 8h5" fill="#bfe0ec" stroke="#2f6f94" stroke-width="1.5"/>',
  undo: '<path d="M4 12c8 3 10-8 2-8" fill="none" stroke="#3c79b0" stroke-width="2.5"/><path d="M1 4l6-4v8z" fill="#3c79b0"/>',
  lens: '<path d="M1 1h7v10H1z" fill="#dfe9d0" stroke="#87a070"/><circle cx="8" cy="7" r="4" fill="#e8f3fb" stroke="#51708b" stroke-width="1.5"/><path d="M11 10l4 5" stroke="#333" stroke-width="2"/>',
  search: '<circle cx="10" cy="6" r="5" fill="none" stroke="#3e6fa5" stroke-width="1.5"/><path d="M6 10l-5 5" stroke="#3e6fa5" stroke-width="2"/>',
  rowadd: '<path d="M1 2h10M1 6h10M1 10h6M1 14h12" stroke="#7f9c7a" stroke-width="2"/><path d="M11 7v6M8 10h6" stroke="#3c9a3c" stroke-width="2"/>',
  trash: '<path d="M3 4h10l-1 11H4z" fill="#b5d5e8" stroke="#4a83a5"/><path d="M2 2h12v2H2z" fill="#4a83a5"/>',
  cut: '<path d="M4 1l6 9M12 1l-6 9" stroke="#889" stroke-width="1.5"/><circle cx="4" cy="12" r="2.5" fill="none" stroke="#3b7cba" stroke-width="1.5"/><circle cx="12" cy="12" r="2.5" fill="none" stroke="#3b7cba" stroke-width="1.5"/>',
  copy: '<path d="M1 1h9v11H1z" fill="#fff" stroke="#7d8791"/><path d="M6 5h8v10H6z" fill="#f8fafc" stroke="#7d8791"/>',
  edit: '<path d="M2 3h9v12H2z" fill="#e6f0f8" stroke="#6a90b0"/><path d="M5 12l1-3 7-7 2 2-7 7z" fill="#4a7db0"/>',
  grid: '<path d="M1 2h14v12H1z" fill="#d9e3c4" stroke="#7c7a4c"/><path d="M1 6h14M1 10h14M6 2v12M11 2v12" stroke="#8c7c46" stroke-width="1.3"/>',
  tree: '<path d="M6 1h5v4H6z" fill="#e9c65a"/><path d="M1 10h5v5H1zM10 10h5v5h-5z" fill="#a9c9b5" stroke="#5f7f6b"/><path d="M8 5v3M3 10V8h10v2" stroke="#667" fill="none"/>',
  up: '<path d="M8 1l7 12H1z" fill="#4f9a5d"/>', down: '<path d="M8 14L1 2h14z" fill="#4f9a5d"/>',
  filter: '<path d="M1 2h14L10 9v6L6 13V9z" fill="#7fb1da" stroke="#4c7ba5"/>',
  chart: '<path d="M2 2h8v8H2z" fill="#f3e2c5" stroke="#c98f4e"/><path d="M7 6h7v8H7z" fill="#e8953a"/>',
  lock: '<path d="M2 2h6v8H2z" fill="#eee0c0" stroke="#a98"/><path d="M7 8h8v7H7z" fill="#7f95a8"/><path d="M9 8V5h4v3" stroke="#567" fill="none"/>',
  padlock: '<path d="M3 7h10v8H3z" fill="#dbe6ee" stroke="#60798c"/><path d="M5 7V2h6v5" stroke="#60798c" stroke-width="1.5" fill="none"/>',
  unlock: '<path d="M1 8h9v7H1z" fill="#dbe6ee" stroke="#4f6a7e"/><path d="M8 8V2h6v5" stroke="#4f6a7e" stroke-width="1.8" fill="none"/>',
  info: '<path d="M2 1h12v14H2z" fill="#e6f3fc" stroke="#83aac6"/><path d="M7 3h2v2H7zM7 6h2v7H7z" fill="#2c6aa8"/>',
  stop: '<path d="M5 1h6l4 4v6l-4 4H5l-4-4V5z" fill="#b06a72"/><path d="M8 4v8M4 8h8" stroke="#fff" stroke-width="2"/>',
  doc: '<path d="M2 1h12v14H2z" fill="#d3e6f3" stroke="#4a7d9c"/><path d="M4 5h8M4 8h8M4 11h8" stroke="#4a7d9c" stroke-width="1.3"/>',
  flag: '<path d="M2 2h12v8H4v5H2z" fill="#6cb04a"/>', sum: '<path d="M2 1h12v3H7l4 4-4 4h7v3H2v-2l5-5-5-5z" fill="#4c9a4c"/>',
  arrow: '<path d="M1 6h7V2l7 6-7 6v-4H1z" fill="#d28b2a"/>',
  x: '<path d="M3 3l10 10M13 3L3 13" stroke="#c2302a" stroke-width="4"/>',
  par: '<path d="M1 5h6v5H1zM9 5h6v5H9z" fill="#5ca2b5"/><path d="M2 8h12" stroke="#fff"/>',
  clock: '<circle cx="8" cy="7" r="6" fill="#eef6e8" stroke="#5e7667" stroke-width="1.5"/><path d="M8 3v5h4M6 15l6-4" stroke="#4b5f54" stroke-width="1.5" fill="none"/>',
  logi: '<path d="M2 1h12v14H2z" fill="#f0a63a"/><path d="M4 4h8M4 8h5" stroke="#a35a10" stroke-width="2"/>',
  green: '<path d="M2 2h12v12H2z" fill="#35b54a"/>', dia: '<path d="M8 3l5 5-5 5-5-5z" fill="#64a6d8" stroke="#3c75a8"/>',
  person: '<circle cx="8" cy="5" r="4" fill="none" stroke="#dfeee5" stroke-width="2"/><path d="M1 15c1-7 13-7 14 0" fill="none" stroke="#dfeee5" stroke-width="2"/>',
  clip: '<path d="M2 2h10v12H2z" fill="#e8b45e"/><path d="M5 1h4v3H5z" fill="#555"/><path d="M7 6h7v9H7z" fill="#fff" stroke="#888"/>',
  start: '<path d="M1 2l6-1v7H1zM8 1l7-1v8H8zM1 9h6v6l-6-1zM8 9h7v7l-7-1z" fill="#fff"/>',
  server: '<path d="M2 0h5v13H2z" fill="#3579b8"/><path d="M5 9h9v6H5z" fill="#9fb8c8" stroke="#4b7591"/>',
  shell: '<path d="M3 3h12l-3 11H0z" fill="#2d74b8"/><path d="M5 5l4 3-5 4M8 12h4" stroke="#fff" stroke-width="1.5" fill="none"/>',
  folder: '<path d="M1 2h6l1 2h7v11H1z" fill="#f3d35f"/><path d="M1 7h14v8H1z" fill="#f9e594"/><path d="M5 11h6v4H5z" fill="#79b5d8"/>',
  chrome: '<circle cx="8" cy="8" r="7.5" fill="#e4483a"/><path d="M1 5l7 11A8 8 0 0 1 1 5" fill="#36a652"/><path d="M8 16l4-9 3-1a8 8 0 0 1-7 10" fill="#f7cc2f"/><circle cx="8" cy="8" r="3.5" fill="#4688f1" stroke="#fff"/>',
  gui: '<path d="M1 4h14l-3 4H9V6H1z" fill="#5c5f4a"/><path d="M1 8h8v2h3l-3 3H1z" fill="#e0a93c"/>',
  edge: '<path d="M2 9h9a4 4 0 0 0-8-1c0 6 7 7 11 4" stroke="#2b8be0" stroke-width="3" fill="none"/>',
  ball: '<path d="M2 14l5-5" stroke="#888" stroke-width="2"/><circle cx="9" cy="6" r="5" fill="#e9ecee"/><circle cx="12" cy="11" r="3" fill="#555"/>',
  camera: '<path d="M1 2h9v12H1z" fill="#9cc9d6"/><circle cx="11" cy="7" r="4.500" fill="#d9e7ea" stroke="#4b8ea0"/><circle cx="11" cy="7" r="1.500" fill="#244"/>',
  zoom: '<rect x="0" y="1" width="16" height="14" rx="4" fill="#5f9bf0"/><path d="M3 5h7v6H3zM11 8l3-3v6z" fill="#fff"/>',
  xl: '<path d="M1 2l8-2v16l-8-2z" fill="#1f8a4c"/><path d="M9 3h6v10H9z" fill="#e3f2e8"/>',
  word: '<path d="M1 2l8-2v16l-8-2z" fill="#2a5caa"/><path d="M9 3h6v10H9z" fill="#dce8f8"/>',
  none: ''
};
ICONS.findnext = ICONS.find;
ICONS.window2 = ICONS.window;
const icon = n => n === 'none' ? '' : `<svg viewBox="0 0 16 16" aria-hidden="true">${ICONS[n]}</svg>`;
const words = s => (s || '').split(' ').filter(Boolean);

document.querySelectorAll('[data-i]').forEach(e => { e.innerHTML = icon(e.dataset.i); });
document.querySelectorAll('.cursor').forEach(e => {
  e.innerHTML = '<svg viewBox="0 0 8 10"><path d="M1 0v8l2-2 1 3 1-.5-1-3h3z" fill="#fff" stroke="#555" stroke-width=".7"/></svg>';
});

// Window chrome shared by every SAP session
document.querySelectorAll('.shot').forEach(s => {
  const d = s.dataset;
  if (d.menu) {
    const off = words(d.off);
    const std = 'save | back exit cancel | print find findnext | p1 p2 p3 p4 | window window2 | help monitor'.split(' ')
      .map(n => n === '|' ? '<em></em>' : `<button aria-label="${n}" class="${off.includes(n) ? 'off' : ''}">${icon(n)}</button>`).join('');
    s.insertAdjacentHTML('afterbegin', `<nav class="menu"><span>▫</span>${d.menu.split('|').map(m => `<a href="#">${m}</a>`).join('')}</nav>
      <div class="std"><button aria-label="Enter">${icon('ok')}</button><select aria-label="Command"><option></option></select><span>«&nbsp;</span>${std}</div>`);
    s.insertAdjacentHTML('beforeend', `<div class="status">${d.progress ? '<div class="bar-green"></div>' : ''}<div class="sap">SAP</div>
      <span>▹</span><span>${d.tcode} ▾</span><span>Eight20t</span><span>INS</span><span class="off">${icon('page')}</span><span class="off">${icon('window')}</span>${icon('unlock')}</div>
      <div class="task">${['start', 'server', 'shell', 'folder', 'chrome'].map(n => `<button aria-label="${n}">${icon(n)}</button>`).join('')}<button class="on" aria-label="SAP">${icon('gui')}</button><div class="tray">${d.clock}</div></div>
      <div class="winctl">– ❐ ✕</div><div class="mark"><b>Activate Windows</b>Go to System in Control Panel to activate Windows.</div>`);
  }
  s.insertAdjacentHTML('beforeend', `<div class="time">${d.time}</div>`);
});
document.getElementById('task10').innerHTML =
  ['start', 'chrome', 'edge', 'folder', 'ball', 'zoom', 'server', 'xl', 'camera', 'word'].map(n => `<button aria-label="${n}" class="${n === 'xl' ? 'on' : ''}">${icon(n)}</button>`).join('') + '<div class="tray">9:36 PM</div>';

document.querySelectorAll('[data-tools]').forEach(nav => {
  nav.innerHTML = words(nav.dataset.tools).map(t => {
    if (t === 'gap') return '<em></em>';
    const off = t[0] === '-' ? 'off' : '';
    const [n, label] = t.replace(/^-/, '').split(':');
    return `<button class="${off}" aria-label="${(label || n).replace(/_/g, ' ')}">${icon(n)}${(label || '').replace(/_/g, ' ')}</button>`;
  }).join('');
});

// Cells are "classes~text"; [] is a tick box, [x] a ticked one, @name an icon
function cell(c, tag) {
  const i = c.indexOf('~');
  const cls = i < 0 ? '' : c.slice(0, i);
  let t = i < 0 ? c : c.slice(i + 1);
  if (t === '[]' || t === '[x]') t = `<input type="checkbox" aria-label="Flag"${t === '[x]' ? ' checked' : ''}>`;
  else if (t[0] === '@') t = icon(t.slice(1));
  return `<${tag} class="${cls}">${t}</${tag}>`;
}
function table(id, widths, head, rows) {
  document.getElementById(id).innerHTML =
    `<colgroup>${widths.map(w => w ? `<col style="width:${w}px">` : '<col>').join('')}</colgroup><tr>${head.map(h => cell(h, 'th')).join('')}</tr>` +
    rows.map(r => { const k = typeof r[0] === 'object' ? r[0].row : ''; const cs = k ? r.slice(1) : r;
      return `<tr class="${k}">${cs.map(c => cell(c, 'td')).join('')}</tr>`; }).join('');
}

const plan = [['LAB', 'HR', '5.00', '943000', '0.0'], ['MACH', 'HR', '4.00', '943001', '0.0'], ['POWER', 'KWH', '3.00', '943002', '0'], ['QA', 'HR', '', '943004', '0.0'], ['R&M', 'HR', '', '943003', '0.0']]
  .map(([a, u, p, e, q]) => ['s~', 'mono~' + a, 'w~', 'w mono~2', 'w~', 'w mono~2', 'd mono~' + u, 'w mono r~' + p, 'w~', 'w mono r~00001', 'w mono~1', '[]', '[]', 'w mono~' + e, 'w mono~1', 'w mono r~1', 'mono r~' + q, '[]', 'z~']);
plan.push(['s~', 'mono~*Activ', 'd mono r~0.0', 'e~', 'd mono r~0.0', 'e~', 'e~', 'e~', 'e~', 'e~', 'e~', 'e~', 'e~', 'e~', 'e~', 'd mono r~5', 'mono r~0.0', 'e~', 'z~']);
for (let i = 0; i < 6; i++) plan.push(['s~', ...Array(17).fill('e~'), 'z~']);
table('plan', [8, 25, 53, 17, 57, 16, 13, 39, 40, 24, 13, 10, 9, 41, 6, 22, 54, 9, 0],
  ['▤', 'Activit...', 'Plan Activity', 'Dist...', 'Capacity', 'Dist...', 'Unit', 'Price (Fixed)', 'Variable price', 'Price u...', 'Pl...', 'P...', 'A...', 'Alloc. cost el...', 'T', 'EquiNo', 'Scheduled Activity', 'L...', 'z~'], plan);

table('act', [73, 49, 47, 12, 24, 0], ['Alt. Activity Text', 'Activity Type', 'Activity Unit', 'R...', 'Formul...', 'Formula description'],
  [['w dd~Machine-HR', 'mono~MACH', 'hot~', '[]', 'w~', ''], ['w dd~Labor-HR', 'mono~LAB', '', '[]', 'w~', ''], ['w dd~Power-KWH', 'mono~POWER', '', '[]', 'w~', ''],
   ['w~&nbsp;', '', '', '[]', '', ''], ['w~&nbsp;', '', '', '[]', '', ''], ['w~&nbsp;', '', '', '[]', '', '']]);
document.querySelectorAll('#act td:first-child').forEach(td => td.insertAdjacentHTML('beforeend', '<span style="float:right">▾</span>'));

const ops = [];
for (let n = 1; n <= 13; n++) {
  const f = n === 1;
  ops.push(['s~', 'w mono u~0' + String(n * 10).padStart(3, '0'), f ? '' : 'w~', f ? '09.08.2020' : '', 'mono~00:00:00', 'w mono u~' + (f ? 'K100-ACT' : ''), 'w mono~K100', 'w mono~' + (f ? 'PP99' : ''), 'w~', 'w~', '[]', 'mono u~' + (f ? 'REL' : ''), '', f ? '[x]' : '[]', '[]', '[]', '[]', f ? '09.08.2020' : '', '']);
}
table('ops', [9, 16, 17, 38, 32, 31, 17, 19, 26, 73, 13, 35, 34, 18, 16, 17, 13, 39, 0],
  ['', 'Op.', 'SOp', 'Start', 'Start', 'Work Cen...', 'Plant', 'Con...', 'StdText', 'Operation short text', 'Text', 'SysStatus', 'User Stat', 'COMP', 'PRT', 'TP', 'DEP', 'End', 'Operation Qty'], ops);

const line = (t, o, x, p, v, q, a) => ['y~' + t, o, x, '', 'r~' + p, '', 'r~' + v, '', 'r~0.00', '', 'cur~CHF', 'r~' + q, a];
const sub = (t, p, k) => [{ row: k || 'sub' }, t, '', '', 'c~' + (k ? '··' : '·'), 'bold r~' + p, '·', 'bold r~' + p, '·', 'bold r~0.00', '', 'cur bold~CHF', '', ''];
table('ml', [59, 45, 62, 9, 54, 5, 53, 4, 23, 39, 31, 74, 0],
  ['Transaction', 'Origin', 'Origin (Text)', '', 'r~Total Plan Costs', '·', 'r~Total Actual Costs', '·', 'Variance', 'r~P/A ver(%)', 'Currency', 'r~Total Actual Qty', 'Acty Type'],
  [line('Goods Issues', 'K100/K100-RM', 'K100-RM', '1,500.00', '1,500.00', '15', ''), sub('Goods Issues', '1,500.00'),
   line('Confirmations', 'K100-ACT/LAB', 'K100-ACT / LABOUR', '347.40', '347.40', '60.0', 'LAB'), line('', 'K100-ACT/MACH', 'K100-ACT / MACHINERY', '347.25', '347.25', '75.0', 'MACH'),
   line('', 'K100-ACT/POW', 'K100-ACT / POWER', '156.60', '156.60', '45', 'POWER'), sub('Confirmations', '851.25'),
   line('Goods Receipt', 'K100/K100-ACT', 'K100-FG-ACT', '2,351.25-', '2,351.25-', '15-', ''), sub('Goods Receipt', '2,351.25-'), sub('', '0.00', 'tot')]);

table('diffs', [7, 38, 26, 48, 18, 36, 38, 40, 25, 15, 39, 43, 66, 0],
  ['▤', 'Cost Center', 'ActTyp', 'Business Process', 'r~Year', 'DocumentNo', 'Start Date', 'End Date', 'r~Total Qty', 'Unit', 'Status', 'Posting Date', 'r~Total Difference Qty', 'Doc. No. Redist'],
  [['', 'K100-ACT', 'POWER', '', 'r~2020', 'r~3', '09.08.2020', '09.08.2020', 'r~90', 'KWH', 'Distribution Cr', '', 'r~15', '']]);

const kl = (v, o, q, d, k) => [...(k ? [{ row: k }] : []), '943002', 'POWER/ELECTRICITY-IA', '', 'r~' + v, (k ? '' : 'y') + '~' + o, 'r~' + q, 'KWH', '', '', '', (k ? '' : 'cy') + '~' + d];
const ks = (v, o, k) => [{ row: k || 'sub' }, k ? '△' : '', '', k ? '··' : '·', 'bold r~' + v, o, '', '', '', '', '', ''];
table('ksb', [41, 75, 8, 71, 48, 75, 14, 6, 42, 0, 9],
  ['Cost Element', 'Cost element name', '·', 'r~Val.in rep.cur.', 'Partner order no.', 'r~Total quantity', 'PUM', 'O', 'Offsetting Acct', 'Name of Offsetting Account', 'Do'],
  [kl('90.00-', '1000048', '30-', '88'), kl('18.00-', '', '6-', '90'), ks('108.00-', '1000048'), kl('135.00-', '1000049', '45-', '89'), kl('27.00-', '', '9-', '90', 'pick'), ks('162.00-', '1000049'), ks('270.00-', '', 'tot')]);

const fl = (n, a, l, log, m, s, o, c) => [(c || 'b') + '~' + n, 'g c~' + a, 'g c~' + l, 'g c~@par', 'g c~@clock', 'g c~' + log, 'c~' + m, 'r~' + s, 'r~0', 'r~' + o, 't~', 't r~0', 't r~0', 't r~0'];
table('flow', [33, 25, 19, 30, 21, 10, 23, 27, 17, 26, 21, 27, 17, 0],
  ['Flow step', 'Authorizn', 'Locked', 'Parameters', 'Execute', 'Log', 'Mat Stat', 'Successful', 'Errors', 'Still open', 'Act Stat', 'Successful', 'Errors', 'Still open'],
  [fl('Selection', '', '', '@logi', '@green', '27', '0', 'o'), fl('Preparation', '@unlock', '@x', '@logi', '@dia', '25', '2'), fl('Settlement', '@unlock', '@x', '@logi', '@dia', '25', '2'),
   fl('Post Closing', '@padlock', '@x', '', '@dia', '0', '27'), fl('Mark Prices', '', '', '', '', '0', '0')]);

// Worksheet
const cols = 'ABCDEFGHIJKLMNOPQRS'.split('');
const w = [27, 27, 26, 27, 32, 41, 27, 27, 27, 26, 27, 26, 27, 27, 26, 27, 27, 26, 0];
const data = { E6: 'red~ORDER', F6: 'red~A.TYPE POWER', E8: 'num~1000048', F8: 'r~30', E9: 'num~1000049', F9: 'r~45', F11: 'bl~75', G11: 'pk~15', H11: 'ac~=F11+G11' };
let html = `<colgroup><col style="width:12px">${w.map(x => x ? `<col style="width:${x}px">` : '<col>').join('')}</colgroup><tr><th></th>${cols.map(c => `<th class="${c === 'H' ? 'hl' : ''}">${c === 'S' ? '' : c}</th>`).join('')}</tr>`;
for (let r = 1; r <= 20; r++) {
  html += `<tr class="${r === 8 || r === 9 ? 't' : ''}"><th class="${r === 11 ? 'hl' : ''}">${r}</th>`;
  for (const c of cols) {
    if (r === 3 && 'FGHIJ'.includes(c)) continue;
    html += r === 3 && c === 'E' ? '<td class="ye" colspan="6">DISTRIBUTION USG VARIANCE -ACTIVITY TYPE</td>' : cell(data[c + r] || '', 'td');
  }
  html += '</tr>';
}
document.getElementById('cells').innerHTML = html;
```
